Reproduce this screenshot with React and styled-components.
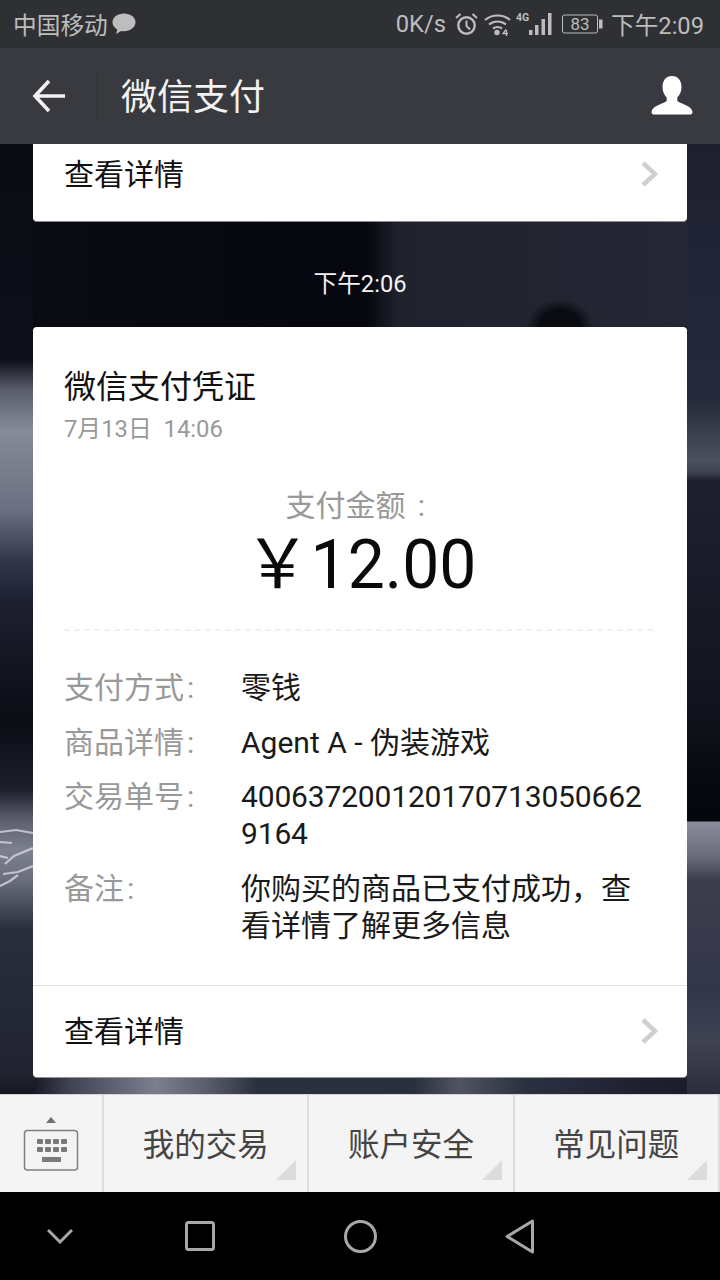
import React from "react";
import styled, { createGlobalStyle } from "styled-components";

const Global = createGlobalStyle`
  html, body { margin: 0; padding: 0; background: #000; }
  * { box-sizing: border-box; }
  #root { width: 720px; height: 1280px; overflow: hidden; }
`;
const FONT = `"Roboto", "Noto Sans CJK SC", sans-serif`;

const Screen = styled.div`
  width: 720px; height: 1280px; display: flex; flex-direction: column;
  font-family: ${FONT}; overflow: hidden;
`;
const StatusBar = styled.div`
  height: 48px; flex: none; background: #2f3034; color: #bdbdbd;
  display: flex; align-items: center; justify-content: space-between;
  padding: 0 16px 0 13px; font-size: 23.7px;
`;
const StatusGroup = styled.div`
  display: flex; align-items: center;
`;
const StatusIcon = styled.span`
  display: flex; align-items: center; margin-left: ${p => p.$ml}px;
`;
const NavBar = styled.div`
  height: 96px; flex: none; background: #393a3f; display: flex; align-items: center;
`;
const BackButton = styled.div`
  width: 97px; height: 48px; display: flex; align-items: center; padding-left: 32px;
  border-right: 1px solid #333438; flex: none;
`;
const NavTitle = styled.div`
  flex: 1; padding: 0 0 4px 24px; color: #f2f2f2; font-size: 36px;
`;
const ProfileButton = styled.div`
  padding-right: 27px; display: flex; align-items: center;
`;
const Chat = styled.div`
  flex: 1; min-height: 0; display: flex; flex-direction: column; align-items: center;
  overflow: hidden; position: relative;
  background-color: #14151f;
  background-repeat: no-repeat;
  background-image:
    linear-gradient(180deg,
      #0a0c14 0, #0d0f19 216px, #5a5d6c 246px, #878a98 286px, #6c6f80 366px,
      #33374a 416px, #1d2030 456px, #0b0c14 576px, #1d1f2c 646px, #5c5f6e 676px,
      #7d808f 706px, #6a6d7c 736px, #4a4d5c 761px, #2a2d3c 786px, #20232f 933px, #14151d 950px),
    linear-gradient(180deg,
      #1e2030 0, #252a3a 256px, #4e515f 317px, #3c3f4d 329px, #1e2030 336px,
      #13141e 556px, #08090f 636px, #05060c 677px, #8b8d9a 678px, #6c6e7c 711px,
      #3c3e4c 736px, #33364a 846px, #404352 896px, #2b2d3a 950px),
    radial-gradient(ellipse 34px 28px at 560px 183px, #0b0c12 60%, transparent 100%),
    linear-gradient(90deg, #0a0b14 0, #05060e 365px, #20222e 400px, #252735 720px),
    linear-gradient(90deg,
      #0f1019 0, #171824 32px, #3e4252 69px, #7a7e8e 156px, #5a5e6c 206px, #2b3040 257px,
      #2a2f3e 413px, #4f5362 459px, #2b3040 527px, #1e2030 642px, #181a26 720px);
  background-position: 0 0, 687px 0, 0 0, 0 77px, 0 933px;
  background-size: 33px 100%, 33px 100%, 720px 184px, 720px 106px, 720px 17px;
`;
const Streaks = styled.svg`
  position: absolute; left: 0; top: 670px; opacity: 0.8;
`;
const Card = styled.div`
  width: 654px; flex: none; background: #fff; border-radius: ${p => p.$clipped ? "0 0 4px 4px" : "4px"};
  box-shadow: 0 1px 0 rgba(170,170,170,.8);
  position: relative;
`;
const TimeLabel = styled.div`
  margin: 49px 0 29px; height: 28px; line-height: 28px; color: #f4f4f4; font-size: 23.7px;
  position: relative;
`;
const LinkRow = styled.div`
  height: ${p => p.$h}px; display: flex; align-items: center; justify-content: space-between;
  padding: 0 29px ${p => p.$pb}px 31px; color: #111; font-size: 30px;
  border-top: ${p => p.$divided ? "1px solid #e2e2e2" : "none"};
`;
const Arrow = styled.span`
  display: flex; margin-top: ${p => p.$mt}px;
`;
const CardBody = styled.div`
  padding: 40px 34px 26px 31px; height: 658px;
`;
const Title = styled.div`
  font-size: 32px; line-height: 40px; color: #111;
`;
const DateLine = styled.div`
  margin-top: 5px; font-size: 23.8px; line-height: 34px; color: #999; white-space: pre;
`;
const Amount = styled.div`
  margin-top: 41px; text-align: center; padding: 0 0 26px 4px;
  border-bottom: 2px dashed #f0f0f0;
`;
const AmountLabel = styled.div`
  font-size: 30px; line-height: 38px; color: #999;
`;
const AmountValue = styled.div`
  margin-top: 2px; font-size: 66px; line-height: 76px; color: #0a0a0a; transform: scaleY(1.04);
`;
const Details = styled.div`
  margin-top: 38px; display: grid; grid-template-columns: 177px 1fr; row-gap: 17.5px;
  font-size: 30px; line-height: 37px;
`;
const Key = styled.div`color: #999; white-space: nowrap;`;
const Val = styled.div`color: #1a1a1a; word-break: break-all;`;
const NumberVal = styled(Val)`letter-spacing: -0.17px;`;
const Punct = styled.span`
  display: inline-block; width: 30px; padding-left: ${p => p.$pl}px;
`;
const Spacer = styled.div`flex: 1;`;
const Menu = styled.div`
  height: 98px; flex: none; background: #f4f4f4; display: flex;
  border-top: 1px solid #d5d5d7;
`;
const KeyboardCell = styled.div`
  width: 104px; flex: none; border-right: 2px solid #dcdcdc;
  display: flex; flex-direction: column; align-items: center; padding-top: 20px;
`;
const MenuItem = styled.div`
  flex: 1; position: relative; display: flex; align-items: center; justify-content: center;
  font-size: 31.5px; color: #444; border-right: 2px solid #dcdcdc; padding-bottom: 3px;
  &:after {
    content: ""; position: absolute; right: 11px; bottom: 12px;
    border-style: solid; border-width: 0 0 20px 20px;
    border-color: transparent transparent #dcdcdc transparent;
  }
`;
const SystemBar = styled.div`
  height: 88px; flex: none; background: #000;
  display: grid; grid-template-columns: 120px 160px 160px 160px; align-items: center;
  justify-items: center;
`;

const Bubble = () => (
  <svg width="24" height="22" viewBox="0 0 24 22" style={{ marginLeft: 4 }}><path fill="#bdbdbd" d="M12 0.5C5.6.5.5 4.4.5 9.3c0 3 1.9 5.5 4.7 7.1L4.2 21l5-3c.9.2 1.8.2 2.8.2 6.4 0 11.5-3.9 11.5-8.9S18.4.5 12 .5z"/></svg>
);
const Alarm = () => (
  <svg width="23" height="23" viewBox="0 0 23 23" fill="none" stroke="#bdbdbd"><circle cx="11.5" cy="12.5" r="8.2" strokeWidth="2.4"/><path d="M11.5 7.5v5.500l3.500 3.500" strokeWidth="2"/><path d="M1 5 5.500 1M22 5 17.500 1" strokeWidth="2.200"/></svg>
);
const Wifi = () => (
  <svg width="27" height="23" viewBox="0 0 27 23" fill="none" stroke="#bdbdbd" strokeWidth="2.200"><path d="M1 7C8 1 19 1 26 7M5 11.500c5-4 12-4 17 0M9 15.500c3-2 6-2 9 0"/><circle cx="13" cy="19.500" r="2.700" fill="#bdbdbd" stroke="none"/><path d="M22 16.500l-3 4h5M22.500 17v6" strokeWidth="1.300"/></svg>
);
const Signal = () => (
  <svg width="36" height="24" viewBox="0 0 36 24" fill="#bdbdbd"><text x="0" y="9" fontSize="10.500" fontWeight="700" fontFamily="Roboto, sans-serif">4G</text><rect x="13" y="18" width="3.500" height="5"/><rect x="19" y="13" width="3.500" height="10"/><rect x="25.500" y="7" width="3.500" height="16"/><rect x="32" y="1" width="3.500" height="22"/></svg>
);
const Battery = () => (
  <svg width="41" height="20" viewBox="0 0 41 20" fill="none"><rect x=".5" y="1" width="35" height="18" rx="2" stroke="#bdbdbd"/><rect x="37" y="5.500" width="3.500" height="9" fill="#bdbdbd"/><text x="18" y="15.800" textAnchor="middle" fontSize="17" fill="#bdbdbd" fontFamily="Roboto, sans-serif">83</text></svg>
);
const Back = () => (
  <svg width="34" height="34" viewBox="0 0 34 34" fill="none" stroke="#f4f4f4" strokeWidth="3.600"><path d="M17 2 3 17l14 15M3 17h30"/></svg>
);
const Person = () => (
  <svg width="42" height="42" viewBox="0 0 42 42" fill="#fff"><path d="M21 1c-6 0-9.500 4.500-9.500 11 0 4.500 1.800 8 4.200 10.500v3.500c-3 2.500-15 5-15.200 11 0 1.500 1 2.500 2 2.500h37c1 0 2-1 2-2.500-.2-6-12.200-8.500-15.200-11v-3.500c2.400-2.500 4.200-6 4.200-10.500C30.500 5.500 27 1 21 1z"/></svg>
);
const Chevron = () => (
  <svg width="18" height="26" viewBox="0 0 18 26" fill="none" stroke="#cfcfcf" strokeWidth="4.500"><path d="M3 2l12 11L3 24"/></svg>
);
const KeyboardIcon = () => (
  <svg width="56" height="56" viewBox="0 0 56 56" fill="none">
    <path d="M23 8l5-6 5 6z" fill="#6f6f6f"/>
    <rect x="1.500" y="15.500" width="53" height="39.500" rx="3" stroke="#808080" strokeWidth="1.500"/>
    {[0, 1, 2, 3].map(i => <rect key={i} x={14 + i * 8} y="24" width="6" height="5" rx="1" fill="#7a7a7a"/>)}
    {[0, 1, 2, 3].map(i => <rect key={i} x={14 + i * 8} y="32" width="6" height="5" rx="1" fill="#7a7a7a"/>)}
    <rect x="19" y="42" width="19" height="5" fill="#7a7a7a"/>
  </svg>
);
const SysBack = () => (
  <svg width="30" height="35" viewBox="0 0 30 35" fill="none" stroke="#a8a8a8" strokeWidth="3" strokeLinejoin="round"><path d="M27.500 2v31L2 17.500z"/></svg>
);

export default function App() {
  return (
    <Screen>
      <Global />
      <StatusBar>
        <StatusGroup>中国移动<Bubble /></StatusGroup>
        <StatusGroup>
          0K/s
          <StatusIcon $ml={9}><Alarm /></StatusIcon>
          <StatusIcon $ml={6}><Wifi /></StatusIcon>
          <StatusIcon $ml={5}><Signal /></StatusIcon>
          <StatusIcon $ml={10}><Battery /></StatusIcon>
          <StatusIcon $ml={8}>下午2:09</StatusIcon>
        </StatusGroup>
      </StatusBar>
      <NavBar>
        <BackButton><Back /></BackButton>
        <NavTitle>微信支付</NavTitle>
        <ProfileButton><Person /></ProfileButton>
      </NavBar>
      <Chat>
        <Streaks width="33" height="100" viewBox="0 0 33 100" fill="none" stroke="#d6d8e2" strokeWidth="2.200">
          <path d="M0 18l16-2 17 3M0 28l12 1M33 34 14 42 5 50M33 52 18 58 3 60M0 72l10-5 8-6M0 42l8 2"/>
        </Streaks>
        <Card $clipped><LinkRow $h={77} $pb={22}>查看详情<Arrow $mt={4}><Chevron /></Arrow></LinkRow></Card>
        <TimeLabel>下午2:06</TimeLabel>
        <Card>
          <CardBody>
            <Title>微信支付凭证</Title>
            <DateLine>7月13日  14:06</DateLine>
            <Amount>
              <AmountLabel>支付金额<Punct $pl={2}>:</Punct></AmountLabel>
              <AmountValue>￥12.00</AmountValue>
            </Amount>
            <Details>
              <Key>支付方式<Punct $pl={3}>:</Punct></Key><Val>零钱</Val>
              <Key>商品详情<Punct $pl={3}>:</Punct></Key><Val>Agent A - 伪装游戏</Val>
              <Key>交易单号<Punct $pl={3}>:</Punct></Key><NumberVal>4006372001201707130506629164</NumberVal>
              <Key>备注<Punct $pl={3}>:</Punct></Key><Val>你购买的商品已支付成功，查看详情了解更多信息</Val>
            </Details>
          </CardBody>
          <LinkRow $h={92} $pb={6} $divided>查看详情<Arrow $mt={4}><Chevron /></Arrow></LinkRow>
        </Card>
        <Spacer />
      </Chat>
      <Menu>
        <KeyboardCell><KeyboardIcon /></KeyboardCell>
        <MenuItem>我的交易</MenuItem>
        <MenuItem>账户安全</MenuItem>
        <MenuItem>常见问题</MenuItem>
      </Menu>
      <SystemBar>
        <svg width="26" height="16" viewBox="0 0 26 16" fill="none" stroke="#a8a8a8" strokeWidth="3"><path d="M1 2l12 12L25 2"/></svg>
        <svg width="30" height="30" viewBox="0 0 30 30" fill="none" stroke="#a8a8a8" strokeWidth="3"><rect x="1.500" y="1.500" width="27" height="27" rx="2"/></svg>
        <svg width="33" height="33" viewBox="0 0 33 33" fill="none" stroke="#a8a8a8" strokeWidth="3"><circle cx="16.500" cy="16.500" r="15"/></svg>
        <SysBack />
      </SystemBar>
    </Screen>
  );
}
